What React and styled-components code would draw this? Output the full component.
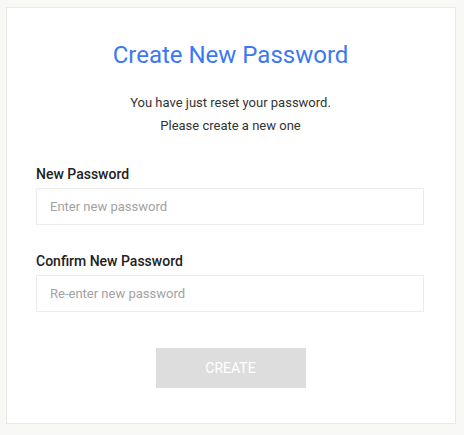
import React from 'react';
import styled, { createGlobalStyle } from 'styled-components';

const GlobalStyle = createGlobalStyle`
  html, body {
    margin: 0;
    padding: 0;
    background: #f8f8f6;
  }
  body {
    font-family: Roboto, "Liberation Sans", sans-serif;
  }
  * {
    box-sizing: border-box;
  }
`;

const Page = styled.div`
  padding: 7px 8px 11px 6px;
`;

const Card = styled.div`
  width: 450px;
  height: 417px;
  background: #fff;
  border: 1px solid #e9e9e7;
  padding: 32px 30px 0 29px;
  display: flex;
  flex-direction: column;
`;

const Title = styled.h1`
  margin: 0;
  text-align: center;
  font-size: 24px;
  font-weight: 400;
  color: #3b79f3;
  line-height: 30px;
`;

const Intro = styled.p`
  margin: 21px 0 0;
  text-align: center;
  font-size: 13px;
  line-height: 23px;
  color: #333;
`;

const Field = styled.div`
  display: flex;
  flex-direction: column;
  margin-top: ${(p) => p.$top}px;
`;

const Label = styled.label`
  font-size: 14px;
  font-weight: 500;
  color: #222;
  line-height: 18px;
  margin-bottom: 5px;
`;

const Input = styled.input`
  width: 388px;
  height: 37px;
  border: 1px solid #ececec;
  padding: 0 13px;
  font-family: inherit;
  font-size: 13px;
  color: #333;
  outline: none;

  &::placeholder {
    color: #a2a2a2;
  }
`;

const Actions = styled.div`
  display: flex;
  justify-content: center;
  margin-top: 36px;
`;

const Button = styled.button`
  width: 150px;
  height: 40px;
  border: none;
  background: #dddddd;
  color: #fff;
  font-family: inherit;
  font-size: 14px;
  font-weight: 400;
  text-transform: uppercase;
  cursor: not-allowed;
`;

export default function App() {
  return (
    <>
      <GlobalStyle />
      <Page>
        <Card>
          <Title>Create New Password</Title>
          <Intro>
            You have just reset your password.
            <br />
            Please create a new one
          </Intro>
          <Field $top={28}>
            <Label>New Password</Label>
            <Input type="password" placeholder="Enter new password" />
          </Field>
          <Field $top={27}>
            <Label>Confirm New Password</Label>
            <Input type="password" placeholder="Re-enter new password" />
          </Field>
          <Actions>
            <Button disabled>Create</Button>
          </Actions>
        </Card>
      </Page>
    </>
  );
}
